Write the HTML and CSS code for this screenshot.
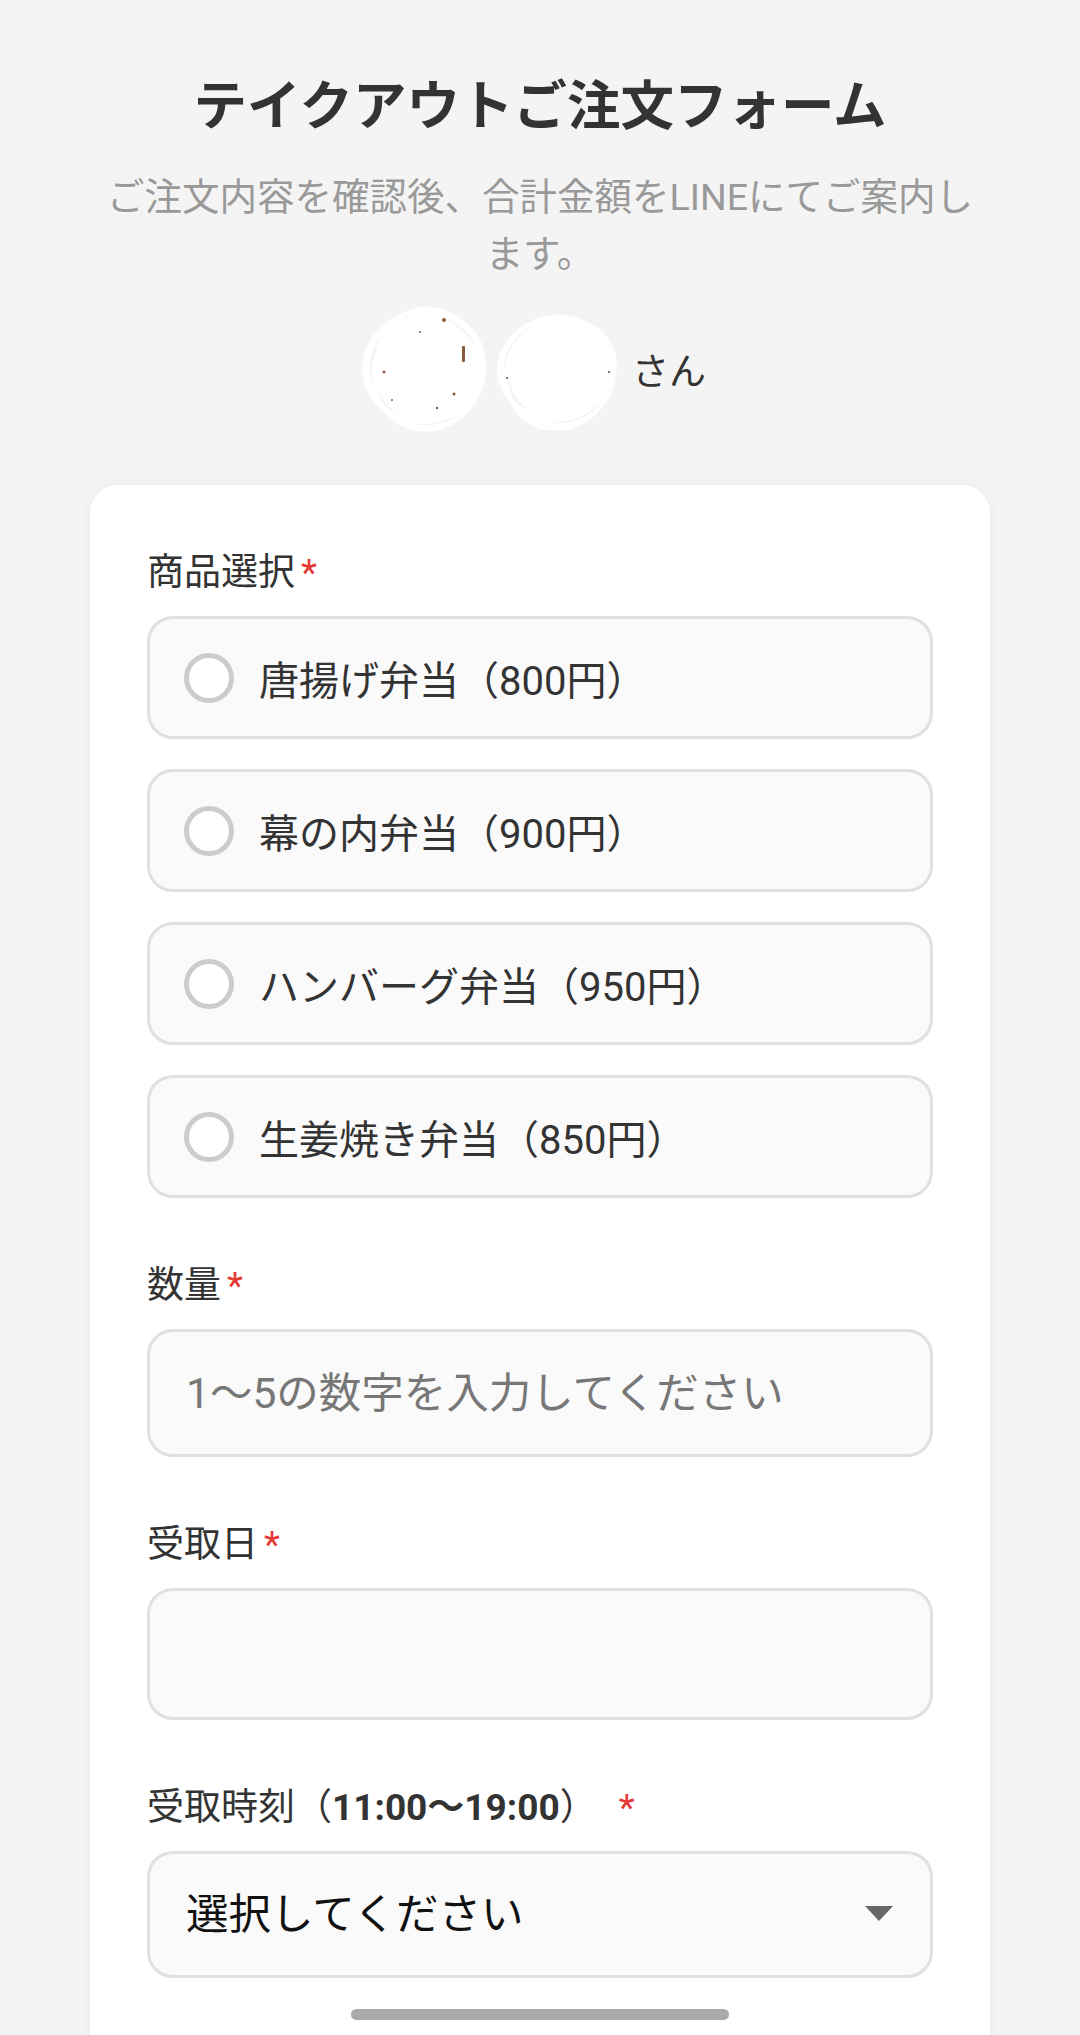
FILE: index.html
```html
<!DOCTYPE html>
<html lang="ja">
<head>
    <meta charset="UTF-8">
    <meta name="viewport" content="width=device-width, initial-scale=1.0">
    <title>テイクアウトご注文フォーム</title>
    <link rel="stylesheet" href="styles.css">
</head>
<body>
    <header class="page-head">
        <h1>テイクアウトご注文フォーム</h1>
        <p class="lead">ご注文内容を確認後、合計金額をLINEにてご案内します。</p>

        <!-- User name (hidden with scribbles in the screenshot) -->
        <div class="user-row">
            <svg class="blob" width="130" height="126" viewBox="0 0 130 126">
                <g fill="none" stroke="#fff" stroke-width="4">
                    <ellipse cx="64" cy="63" rx="58" ry="58" transform="rotate(8 64 63)"/>
                    <ellipse cx="62" cy="60" rx="60" ry="54" transform="rotate(-12 62 60)"/>
                    <ellipse cx="66" cy="66" rx="54" ry="58" transform="rotate(20 66 66)"/>
                    <ellipse cx="60" cy="64" rx="57" ry="52"/>
                    <ellipse cx="68" cy="58" rx="52" ry="56" transform="rotate(-30 68 58)"/>
                </g>
                <ellipse cx="64" cy="63" rx="52" ry="53" fill="#fff"/>
                <g fill="#8a5a3c">
                    <rect x="100" y="40" width="3" height="16" rx="1"/>
                    <circle cx="82" cy="14" r="2"/>
                    <circle cx="22" cy="66" r="1.5"/>
                    <circle cx="92" cy="88" r="1.5"/>
                    <circle cx="58" cy="26" r="1"/>
                    <circle cx="75" cy="102" r="1.2"/>
                    <circle cx="30" cy="94" r="1"/>
                </g>
            </svg>
            <svg class="blob" width="122" height="122" viewBox="0 0 122 122">
                <g fill="none" stroke="#fff" stroke-width="4">
                    <ellipse cx="61" cy="63" rx="56" ry="54" transform="rotate(10 61 63)"/>
                    <ellipse cx="60" cy="60" rx="58" ry="50" transform="rotate(-8 60 60)"/>
                    <ellipse cx="62" cy="66" rx="52" ry="56" transform="rotate(25 62 66)"/>
                    <ellipse cx="58" cy="62" rx="55" ry="50"/>
                </g>
                <ellipse cx="61" cy="62" rx="50" ry="50" fill="#fff"/>
                <g fill="#444">
                    <circle cx="10" cy="70" r="1"/>
                    <circle cx="112" cy="64" r="1"/>
                </g>
            </svg>
            <span class="user-suffix">さん</span>
        </div>
    </header>

    <main class="card">
        <form class="order-form">
            <!-- Product -->
            <div class="form-group">
                <div class="label">商品選択<span class="required">*</span></div>
                <div class="options">
                    <label class="option"><input type="radio" name="menu" value="karaage"><span>唐揚げ弁当（800円）</span></label>
                    <label class="option"><input type="radio" name="menu" value="makunouchi"><span>幕の内弁当（900円）</span></label>
                    <label class="option"><input type="radio" name="menu" value="hamburg"><span>ハンバーグ弁当（950円）</span></label>
                    <label class="option"><input type="radio" name="menu" value="shogayaki"><span>生姜焼き弁当（850円）</span></label>
                </div>
            </div>

            <!-- Quantity -->
            <div class="form-group">
                <label class="label" for="qty">数量<span class="required">*</span></label>
                <input class="field" type="text" id="qty" inputmode="numeric" placeholder="1〜5の数字を入力してください">
            </div>

            <!-- Pickup date -->
            <div class="form-group">
                <label class="label" for="pickupDate">受取日<span class="required">*</span></label>
                <input class="field field-date" type="text" id="pickupDate">
            </div>

            <!-- Pickup time -->
            <div class="form-group">
                <label class="label" for="pickupTime">受取時刻（<b>11:00〜19:00</b>）<span class="required required-wide">*</span></label>
                <div class="select-wrap">
                    <select class="field field-select" id="pickupTime">
                        <option>選択してください</option>
                        <option>11:00</option>
                        <option>12:00</option>
                        <option>13:00</option>
                    </select>
                </div>
            </div>
        </form>
    </main>

    <div class="gesture-bar"></div>
</body>
</html>
```

FILE: styles.css
```css
:root {
    --bg-color: #f4f4f4;
    --text-color: #333;
    --muted-color: #999;
    --field-bg: #fafafa;
    --field-border: #e0e0e0;
    --required-color: #e53935;
}

* {
    box-sizing: border-box;
    margin: 0;
    padding: 0;
}

body {
    font-family: Roboto, "Noto Sans CJK JP", sans-serif;
    color: var(--text-color);
    background-color: var(--bg-color);
    width: 1080px;
    min-height: 2035px;
    padding: 73px 90px 0;
}

.page-head {
    text-align: center;
}

h1 {
    font-size: 53.5px;
    font-weight: 700;
    line-height: 68px;
    color: #333;
}

.lead {
    max-width: 890px;
    margin: 28px auto 0;
    font-size: 37.5px;
    line-height: 57px;
    color: var(--muted-color);
}

.user-row {
    display: flex;
    justify-content: center;
    align-items: center;
    margin-top: 23px;
    height: 126px;
    padding-right: 12px;
}

.blob {
    display: block;
}

.blob + .blob {
    margin-left: 5px;
}

.user-suffix {
    margin-left: 13px;
    font-size: 37px;
    color: #333;
}

.card {
    margin-top: 53px;
    background: #fff;
    border-radius: 28px 28px 0 0;
    padding: 60px 57px 120px;
    box-shadow: 0 2px 12px rgba(0, 0, 0, 0.05);
    min-height: 1560px;
}

.form-group + .form-group {
    margin-top: 60px;
}

.label {
    display: block;
    font-size: 37px;
    line-height: 55px;
    color: var(--text-color);
    margin-bottom: 16px;
}

.label b {
    font-weight: 700;
}

.required {
    color: var(--required-color);
    margin-left: 6px;
}

.required-wide {
    margin-left: 22px;
}

.options {
    display: flex;
    flex-direction: column;
    gap: 30px;
}

.option {
    display: flex;
    align-items: center;
    height: 123px;
    padding-left: 34px;
    background: var(--field-bg);
    border: 3px solid var(--field-border);
    border-radius: 26px;
    font-size: 40px;
    color: var(--text-color);
}

.option input {
    appearance: none;
    -webkit-appearance: none;
    width: 50px;
    height: 50px;
    border: 5px solid #ccc;
    border-radius: 50%;
    background: #fff;
    margin-right: 25px;
    flex-shrink: 0;
}

.field {
    display: block;
    width: 100%;
    height: 128px;
    padding: 0 36px;
    background: var(--field-bg);
    border: 3px solid var(--field-border);
    border-radius: 26px;
    font-family: inherit;
    font-size: 42.5px;
    color: #222;
    outline: none;
}

.field::placeholder {
    color: #777;
}

.field-date {
    height: 132px;
}

.select-wrap {
    position: relative;
}

.field-select {
    appearance: none;
    -webkit-appearance: none;
    height: 127px;
    color: #111;
}

/* dropdown arrow */
.select-wrap::after {
    content: "";
    position: absolute;
    right: 40px;
    top: 55px;
    border-left: 14px solid transparent;
    border-right: 14px solid transparent;
    border-top: 15px solid #666;
}

.gesture-bar {
    position: fixed;
    left: 351px;
    bottom: 15px;
    width: 378px;
    height: 11px;
    border-radius: 6px;
    background: #aaa;
}
```
